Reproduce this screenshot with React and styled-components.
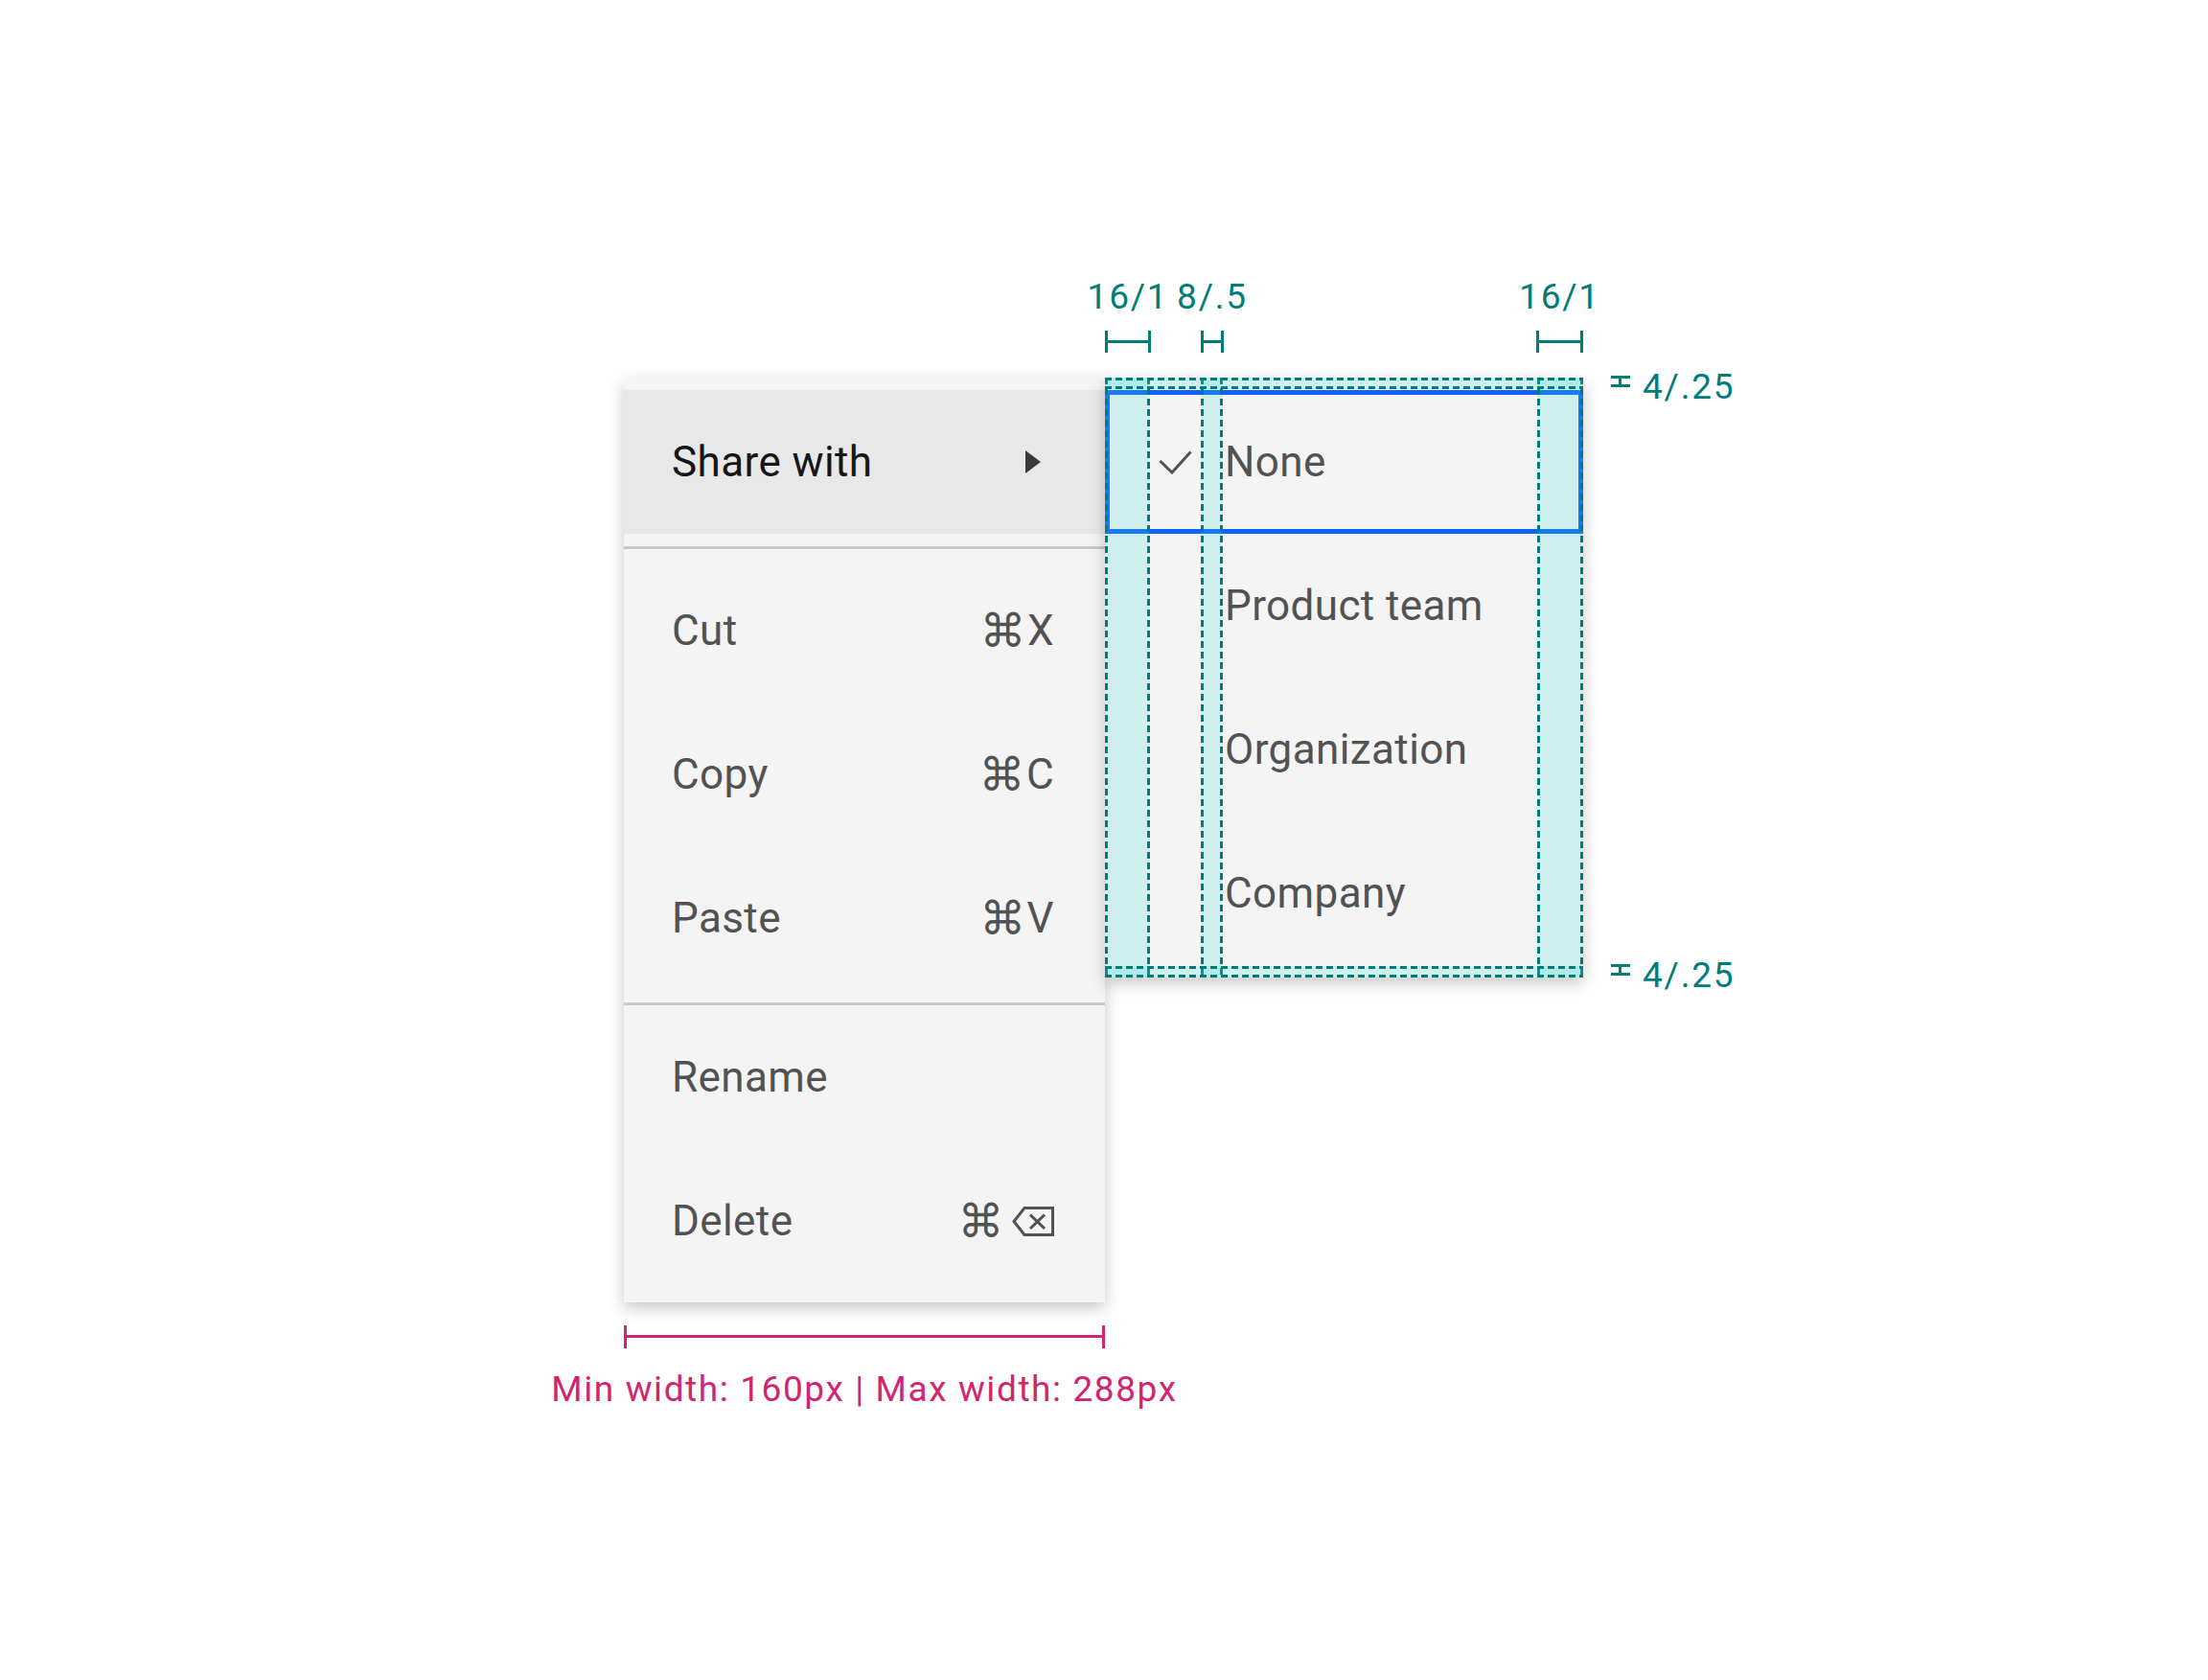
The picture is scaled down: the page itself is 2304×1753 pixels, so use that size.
import React from "react";
import styled, { createGlobalStyle } from "styled-components";

const teal = "#007d79";
const shade = "rgba(61, 219, 217, 0.2)";
const pink = "#d02670";

const vDash = (side) =>
  `repeating-linear-gradient(to bottom, ${teal} 0 7px, transparent 7px 11px) ${side} top / 3px 100% no-repeat`;
const hDash = (side) =>
  `repeating-linear-gradient(to right, ${teal} 0 7px, transparent 7px 11px) left ${side} / 100% 3px no-repeat`;

const GlobalStyle = createGlobalStyle`
  html, body {
    margin: 0;
    background: #ffffff;
  }
  body {
    font-family: Roboto, "Noto Sans", sans-serif;
  }
`;

const Page = styled.div`
  width: 2304px;
  height: 1753px;
  box-sizing: border-box;
  padding: 394px 0 0 651px;
`;

const Figure = styled.div`
  display: inline-flex;
  flex-direction: column;
  align-items: flex-start;
`;

const MenuRow = styled.div`
  display: flex;
  align-items: flex-start;
`;

const Menu = styled.ul`
  list-style: none;
  margin: 0;
  padding: 13px 0 10px;
  width: 502px;
  background: #f4f4f4;
  box-shadow: 0 6px 16px rgba(0, 0, 0, 0.22);
`;

const MenuItem = styled.li`
  height: 150px;
  display: flex;
  align-items: center;
  justify-content: space-between;
  padding: 0 53px 0 50px;
  font-size: 44px;
  letter-spacing: 0.4px;
  color: ${({ $active }) => ($active ? "#161616" : "#525252")};
  background: ${({ $active }) => ($active ? "#e8e8e8" : "transparent")};
`;

const Divider = styled.li`
  height: 3px;
  background: #c9c9c9;
  margin: 13px 0 ${({ $after }) => $after}px;
`;

const Shortcut = styled.span`
  display: flex;
  align-items: center;
  gap: ${({ $gap }) => $gap || 0}px;
  font-size: 44px;
  color: #525252;
`;

const Cmd = styled.span`
  font-family: "DejaVu Sans", "Noto Sans CJK JP", sans-serif;
  font-size: 48px;
  line-height: 1;
  margin-right: 1px;
`;

const Chevron = styled.svg`
  width: 16px;
  height: 24px;
  margin-right: 14px;
`;

const SubMenu = styled.ul`
  position: relative;
  list-style: none;
  margin: 0;
  padding: 13px 0;
  width: 499px;
  background: #f4f4f4;
  box-shadow: 0 6px 16px rgba(0, 0, 0, 0.22);
`;

const SubItem = styled.li`
  height: 150px;
  display: flex;
  align-items: center;
  padding-left: 56px;
  font-size: 44px;
  letter-spacing: 0.4px;
  color: #525252;
  outline: ${({ $focused }) => ($focused ? "5px solid #0f62fe" : "none")};
  outline-offset: -5px;
`;

const CheckSlot = styled.span`
  width: 35px;
  height: 25px;
  margin-right: 34px;
  display: flex;
`;

/* spec overlay drawn on top of the submenu */
const ColumnLayer = styled.div`
  position: absolute;
  inset: 0;
  display: flex;
  pointer-events: none;
`;

const Column = styled.div`
  flex: ${({ $w }) => ($w ? `0 0 ${$w}px` : "1")};
  background: ${({ $shade }) =>
    $shade ? `${vDash("left")}, ${vDash("right")}, ${shade}` : "none"};
`;

const RowLayer = styled.div`
  position: absolute;
  inset: 0;
  display: flex;
  flex-direction: column;
  justify-content: space-between;
  pointer-events: none;
`;

const Strip = styled.div`
  height: 12px;
  background: ${hDash("top")}, ${hDash("bottom")}, ${shade};
`;

const TopSpecs = styled.div`
  position: absolute;
  left: 0;
  right: 0;
  bottom: calc(100% + 26px);
  display: flex;
  align-items: flex-end;
`;

const Spec = styled.div`
  width: ${({ $w }) => $w}px;
  margin-left: ${({ $ml }) => $ml};
  display: flex;
  flex-direction: column;
  align-items: center;
`;

const SpecLabel = styled.span`
  font-size: 37px;
  line-height: 40px;
  letter-spacing: 1.8px;
  color: ${({ $color }) => $color || teal};
  white-space: nowrap;
`;

const Bracket = styled.div`
  position: relative;
  align-self: stretch;
  height: 23px;
  margin-top: 15px;
  border-left: 3px solid ${({ $color }) => $color || teal};
  border-right: 3px solid ${({ $color }) => $color || teal};
  &::after {
    content: "";
    position: absolute;
    left: 0;
    right: 0;
    top: 10px;
    height: 3px;
    background: ${({ $color }) => $color || teal};
  }
`;

const SideSpec = styled.div`
  position: absolute;
  left: calc(100% + 29px);
  top: ${({ $top }) => $top}px;
  display: flex;
  align-items: flex-start;
  gap: 13px;
`;

const GapIcon = styled.div`
  position: relative;
  width: 20px;
  height: 12px;
  box-sizing: border-box;
  border-top: 3px solid ${teal};
  border-bottom: 3px solid ${teal};
  &::after {
    content: "";
    position: absolute;
    left: 8px;
    top: 0;
    width: 3px;
    height: 6px;
    background: ${teal};
  }
`;

const SideLabel = styled(SpecLabel)`
  margin-top: -8px;
`;

const WidthRuler = styled.div`
  width: 502px;
  margin-top: 24px;
  display: flex;
  flex-direction: column;
  align-items: center;
`;

const RulerBar = styled(Bracket)`
  height: 24px;
  margin-top: 0;
`;

const RulerLabel = styled(SpecLabel)`
  margin-top: 23px;
  letter-spacing: 1.6px;
`;

const CheckIcon = () => (
  <svg width="35" height="25" viewBox="0 0 35 25">
    <polyline points="1.5,11 14,23 33.5,1.5" fill="none" stroke="#525252" strokeWidth="3" />
  </svg>
);

const BackspaceIcon = () => (
  <svg width="44" height="31" viewBox="0 0 44 31">
    <path d="M2 15.5 L13 1.5 H42.5 V29.5 H13 Z" fill="none" stroke="#525252" strokeWidth="3" strokeLinejoin="miter" />
    <path d="M19 8.5 L34 23 M34 8.5 L19 23" stroke="#525252" strokeWidth="3" />
  </svg>
);

const menuGroups = [
  [
    { label: "Cut", key: "X" },
    { label: "Copy", key: "C" },
    { label: "Paste", key: "V" },
  ],
  [{ label: "Rename" }, { label: "Delete", backspace: true }],
];

const subItems = ["None", "Product team", "Organization", "Company"];

export default function App() {
  return (
    <>
      <GlobalStyle />
      <Page>
        <Figure>
          <MenuRow>
            <Menu>
              <MenuItem $active>
                Share with
                <Chevron viewBox="0 0 16 24">
                  <polygon points="0,0 16,12 0,24" fill="#393939" />
                </Chevron>
              </MenuItem>
              <Divider $after={10} />
              {menuGroups[0].map((item) => (
                <MenuItem key={item.label}>
                  {item.label}
                  <Shortcut>
                    <Cmd>⌘</Cmd>
                    {item.key}
                  </Shortcut>
                </MenuItem>
              ))}
              <Divider $after={0} />
              {menuGroups[1].map((item) => (
                <MenuItem key={item.label}>
                  {item.label}
                  {item.backspace && (
                    <Shortcut $gap={7}>
                      <Cmd>⌘</Cmd>
                      <BackspaceIcon />
                    </Shortcut>
                  )}
                </MenuItem>
              ))}
            </Menu>

            <SubMenu>
              {subItems.map((name, i) => (
                <SubItem key={name} $focused={i === 0}>
                  <CheckSlot>{i === 0 && <CheckIcon />}</CheckSlot>
                  {name}
                </SubItem>
              ))}

              <ColumnLayer>
                <Column $w={47} $shade />
                <Column $w={53} />
                <Column $w={23} $shade />
                <Column />
                <Column $w={48} $shade />
              </ColumnLayer>
              <RowLayer>
                <Strip />
                <Strip />
              </RowLayer>

              <TopSpecs>
                <Spec $w={48} $ml="0">
                  <SpecLabel>16/1</SpecLabel>
                  <Bracket />
                </Spec>
                <Spec $w={24} $ml="52px">
                  <SpecLabel>8/.5</SpecLabel>
                  <Bracket />
                </Spec>
                <Spec $w={49} $ml="auto">
                  <SpecLabel>16/1</SpecLabel>
                  <Bracket />
                </Spec>
              </TopSpecs>

              <SideSpec $top={-2}>
                <GapIcon />
                <SideLabel>4/.25</SideLabel>
              </SideSpec>
              <SideSpec $top={612}>
                <GapIcon />
                <SideLabel>4/.25</SideLabel>
              </SideSpec>
            </SubMenu>
          </MenuRow>

          <WidthRuler>
            <RulerBar $color={pink} />
            <RulerLabel $color={pink}>Min width: 160px | Max width: 288px</RulerLabel>
          </WidthRuler>
        </Figure>
      </Page>
    </>
  );
}
